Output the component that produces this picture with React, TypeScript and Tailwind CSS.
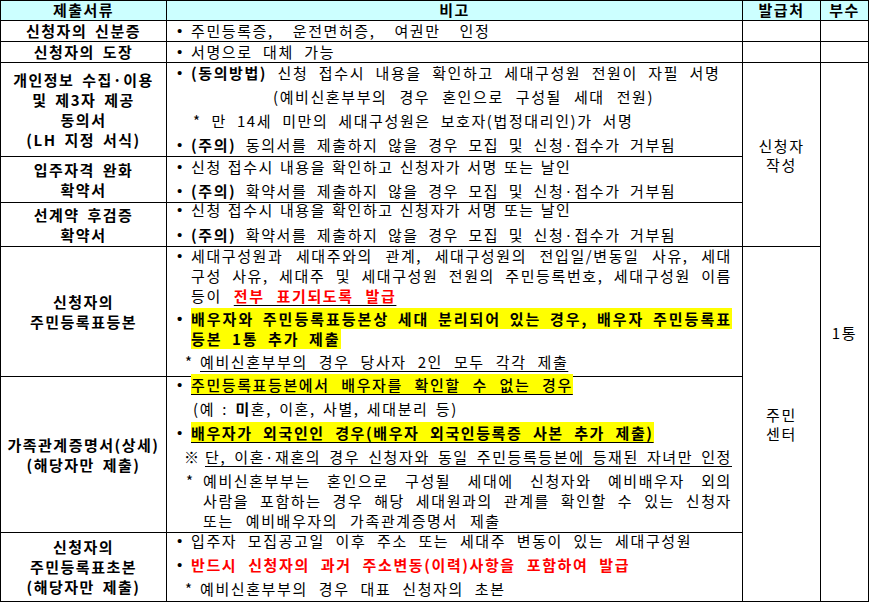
import type { ReactNode } from 'react';

const cell = 'border-r border-b border-black';
const docCell = `${cell} flex flex-col items-center justify-center text-center font-bold leading-[20px] tracking-[1.5px] [word-spacing:3px]`;
const noteCell = `${cell} pr-[10px] leading-[20px]`;
const sideCell = `${cell} flex flex-col items-center justify-center text-center leading-[19px]`;
const headCell = `${cell} flex items-center justify-center bg-[#ccffff] font-bold tracking-[1.5px]`;

function Dot({ children, className = '' }: { children: ReactNode; className?: string }) {
  return (
    <div className={`flex leading-[20px] ${className}`}>
      <span className="w-[24px] shrink-0 pl-[10px] font-['Liberation_Sans',sans-serif] tracking-normal">•</span>
      <div className="min-w-0 flex-1">{children}</div>
    </div>
  );
}

function Star({ children, className = '' }: { children: ReactNode; className?: string }) {
  return (
    <div className={`flex leading-[20px] ${className}`}>
      <span className="w-[33px] shrink-0 pl-[18px]">*</span>
      <div className="min-w-0 flex-1">{children}</div>
    </div>
  );
}

// a line stretched edge to edge, like the justified rows of the form
function Full({ children, className = '' }: { children: ReactNode; className?: string }) {
  return (
    <div className={`whitespace-nowrap text-justify [text-align-last:justify] [word-spacing:0px] ${className}`}>
      {children}
    </div>
  );
}

export default function App() {
  return (
    <div className="bg-white text-black text-[15px] tracking-[1.6px] font-['Noto_Sans_CJK_KR','Noto_Sans',sans-serif] [word-spacing:5.5px]">
      <div className="grid w-[869px] grid-cols-[166px_576px_78px_48px] grid-rows-[20px_21px_21px_94px_46px_44px_130px_156px_69px] border-l border-t border-black">
        {/* header */}
        <div className={headCell}>제출서류</div>
        <div className={headCell}>비고</div>
        <div className={headCell}>발급처</div>
        <div className={headCell}>부수</div>

        {/* 신분증 */}
        <div className={`${docCell} col-start-1 row-start-2`}>신청자의 신분증</div>
        <div className={`${noteCell} col-start-2 row-start-2 flex flex-col justify-center`}>
          <Dot className="[word-spacing:14px]">주민등록증, 운전면허증, 여권만 인정</Dot>
        </div>
        <div className={`${cell} col-start-3 row-start-2`} />
        <div className={`${cell} col-start-4 row-start-2`} />

        {/* 도장 */}
        <div className={`${docCell} col-start-1 row-start-3`}>신청자의 도장</div>
        <div className={`${noteCell} col-start-2 row-start-3 flex flex-col justify-center`}>
          <Dot>서명으로 대체 가능</Dot>
        </div>
        <div className={`${cell} col-start-3 row-start-3`} />
        <div className={`${cell} col-start-4 row-start-3`} />

        {/* 개인정보 동의서 */}
        <div className={`${docCell} col-start-1 row-start-4`}>
          <div>개인정보 수집·이용</div>
          <div>및 제3자 제공</div>
          <div>동의서</div>
          <div>(LH 지정 서식)</div>
        </div>
        <div className={`${noteCell} col-start-2 row-start-4`}>
          <Dot className="[word-spacing:5.5px]">
            <b>(동의방법)</b> 신청 접수시 내용을 확인하고 세대구성원 전원이 자필 서명
          </Dot>
          <div className="mt-[4px] pl-[106px] [word-spacing:7px]">(예비신혼부부의 경우 혼인으로 구성될 세대 전원)</div>
          <div className="mt-[4px] pl-[26px] [word-spacing:5px]">* 만 14세 미만의 세대구성원은 보호자(법정대리인)가 서명</div>
          <Dot className="mt-[4px] [word-spacing:4.5px]">
            <b>(주의)</b> 동의서를 제출하지 않을 경우 모집 및 신청·접수가 거부됨
          </Dot>
        </div>
        <div className={`${sideCell} col-start-3 row-start-4 row-span-3`}>
          <div>신청자</div>
          <div>작성</div>
        </div>
        <div className={`${sideCell} col-start-4 row-start-4 row-span-6`}>1통</div>

        {/* 입주자격 완화 확약서 */}
        <div className={`${docCell} col-start-1 row-start-5`}>
          <div>입주자격 완화</div>
          <div>확약서</div>
        </div>
        <div className={`${noteCell} col-start-2 row-start-5`}>
          <Dot className="[word-spacing:1px]">신청 접수시 내용을 확인하고 신청자가 서명 또는 날인</Dot>
          <Dot className="mt-[4px] [word-spacing:4.5px]">
            <b>(주의)</b> 확약서를 제출하지 않을 경우 모집 및 신청·접수가 거부됨
          </Dot>
        </div>

        {/* 선계약 후검증 확약서 */}
        <div className={`${docCell} col-start-1 row-start-6`}>
          <div>선계약 후검증</div>
          <div>확약서</div>
        </div>
        <div className={`${noteCell} col-start-2 row-start-6`}>
          <Dot className="mt-[-3px] [word-spacing:1px]">신청 접수시 내용을 확인하고 신청자가 서명 또는 날인</Dot>
          <Dot className="mt-[5px] [word-spacing:4.5px]">
            <b>(주의)</b> 확약서를 제출하지 않을 경우 모집 및 신청·접수가 거부됨
          </Dot>
        </div>

        {/* 주민등록표등본 */}
        <div className={`${docCell} col-start-1 row-start-7`}>
          <div>신청자의</div>
          <div>주민등록표등본</div>
        </div>
        <div className={`${noteCell} col-start-2 row-start-7`}>
          <Dot className="mt-[-1px]">
            <Full>세대구성원과 세대주와의 관계, 세대구성원의 전입일/변동일 사유, 세대</Full>
            <Full>구성 사유, 세대주 및 세대구성원 전원의 주민등록번호, 세대구성원 이름</Full>
            <div className="[word-spacing:7px]">
              등이{' '}
              <span className="font-bold text-[#ff0000] underline decoration-black underline-offset-[3px]">
                전부 표기되도록 발급
              </span>
            </div>
          </Dot>
          <Dot className="mt-[3px] font-bold">
            <Full className="tracking-[2px]">
              <span className="bg-[#ffff00]">배우자와 주민등록표등본상 세대 분리되어 있는 경우, 배우자 주민등록표</span>
            </Full>
            <div className="tracking-[2px] [word-spacing:4px]">
              <span className="bg-[#ffff00]">등본 1통 추가 제출</span>
            </div>
          </Dot>
          <Star className="mt-[3px] [word-spacing:6px]">
            <span className="underline underline-offset-[3px]">예비신혼부부의 경우 당사자 2인 모두 각각 제출</span>
          </Star>
        </div>
        <div className={`${sideCell} col-start-3 row-start-7 row-span-3`}>
          <div>주민</div>
          <div>센터</div>
        </div>

        {/* 가족관계증명서 */}
        <div className={`${docCell} col-start-1 row-start-8`}>
          <div>가족관계증명서(상세)</div>
          <div>(해당자만 제출)</div>
        </div>
        <div className={`${noteCell} col-start-2 row-start-8`}>
          <Dot className="mt-[-2px] [word-spacing:6.7px]">
            <span className="bg-[#ffff00] font-medium underline underline-offset-[3px]">
              주민등록표등본에서 배우자를 확인할 수 없는 경우
            </span>
          </Dot>
          <div className="mt-[4px] pl-[26px] [word-spacing:2.3px]">
            (예 : <b>미</b>혼, 이혼, 사별, 세대분리 등)
          </div>
          <Dot className="mt-[4px]">
            <span className="bg-[#ffff00] font-bold underline underline-offset-[3px]">
              배우자가 외국인인 경우(배우자 외국인등록증 사본 추가 제출)
            </span>
          </Dot>
          <div className="mt-[4px] flex leading-[20px]">
            <span className="w-[38px] shrink-0 pl-[17px]">※</span>
            <div className="min-w-0 flex-1 underline underline-offset-[3px]">
              <Full>단, 이혼·재혼의 경우 신청자와 동일 주민등록등본에 등재된 자녀만 인정</Full>
            </div>
          </div>
          <div className="mt-[4px] flex leading-[20px]">
            <span className="w-[36px] shrink-0 pl-[19px]">*</span>
            <div className="min-w-0 flex-1">
              <Full>예비신혼부부는 혼인으로 구성될 세대에 신청자와 예비배우자 외의</Full>
              <Full>사람을 포함하는 경우 해당 세대원과의 관계를 확인할 수 있는 신청자</Full>
              <div className="[word-spacing:7px]">또는 예비배우자의 가족관계증명서 제출</div>
            </div>
          </div>
        </div>

        {/* 주민등록표초본 */}
        <div className={`${docCell} col-start-1 row-start-9`}>
          <div>신청자의</div>
          <div>주민등록표초본</div>
          <div>(해당자만 제출)</div>
        </div>
        <div className={`${noteCell} col-start-2 row-start-9`}>
          <Dot className="mt-[-2px] [word-spacing:5.7px]">입주자 모집공고일 이후 주소 또는 세대주 변동이 있는 세대구성원</Dot>
          <Dot className="mt-[4px] [word-spacing:6px]">
            <span className="font-bold text-[#ff0000]">반드시 신청자의 과거 주소변동(이력)사항을 포함하여 발급</span>
          </Dot>
          <Star className="mt-[4px] [word-spacing:6px]">예비신혼부부의 경우 대표 신청자의 초본</Star>
        </div>
      </div>
    </div>
  );
}
